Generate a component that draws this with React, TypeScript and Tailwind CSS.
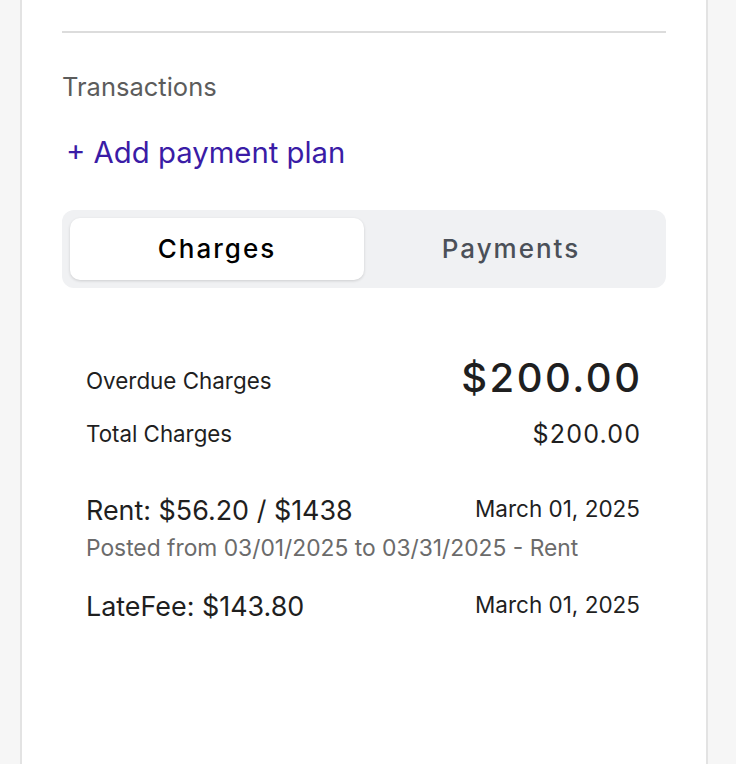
import React, { useState } from 'react';

type Charge = {
  label: string;
  date: string;
  note?: string;
};

const charges: Charge[] = [
  { label: 'Rent: $56.20 / $1438', date: 'March 01, 2025', note: 'Posted from 03/01/2025 to 03/31/2025 - Rent' },
  { label: 'LateFee: $143.80', date: 'March 01, 2025' }
];

const App = () => {
  const [tab, setTab] = useState<'charges' | 'payments'>('charges');
  return <div className="min-h-screen bg-[#f6f6f6] pl-[20px] font-['Inter','Liberation_Sans',sans-serif]">
      <div className="w-[688px] min-h-[764px] bg-white border-x-2 border-[#e3e3e3] px-[40px] pt-[31px]">
        <div className="h-[2px] bg-[#dcdcdc]" />
        <div className="mt-[38px] text-[25.5px] leading-[32px] text-[#5c5c5c]">Transactions</div>
        <button type="button" className="mt-[32px] block pl-[4px] text-[29.3px] leading-[36px] text-[#3a1ca6]">
          + Add payment plan
        </button>
        <div className="mt-[39px] grid grid-cols-2 rounded-[12px] bg-[#f0f1f3] p-[8px]">
          <button type="button" onClick={() => setTab('charges')} className={`h-[62px] pb-[2px] rounded-[10px] text-[26px] font-medium tracking-[2px] ${tab === 'charges' ? 'bg-white text-black shadow-[0_1px_3px_rgba(0,0,0,0.15)]' : 'text-[#4b5058]'}`}>
            Charges
          </button>
          <button type="button" onClick={() => setTab('payments')} className={`h-[62px] pb-[2px] rounded-[10px] text-[26px] font-medium tracking-[2px] ${tab === 'payments' ? 'bg-white text-black shadow-[0_1px_3px_rgba(0,0,0,0.15)]' : 'text-[#4b5058]'}`}>
            Payments
          </button>
        </div>
        <div className="pl-[24px] pr-[26px] text-[#1f1f1f]">
          <div className="mt-[66px] flex items-center justify-between">
            <span className="pt-[6px] text-[22.4px] leading-[30px]">Overdue Charges</span>
            <span className="text-[40px] leading-[48px] font-medium tracking-[2.5px] -mr-[2.5px]">$200.00</span>
          </div>
          <div className="mt-[16px] flex items-center justify-between">
            <span className="text-[22.3px] leading-[30px]">Total Charges</span>
            <span className="text-[25px] leading-[32px] tracking-[1.2px] -mr-[1.2px]">$200.00</span>
          </div>
          {charges.map((c, i) => <div key={c.label} className={i === 0 ? 'mt-[43px]' : 'mt-[26px]'}>
              <div className="flex items-start justify-between">
                <span className="text-[26.9px] leading-[34px]">{c.label}</span>
                <span className="pt-[2px] text-[22.5px] leading-[28px]">{c.date}</span>
              </div>
              {c.note && <div className="mt-[6px] text-[22.8px] leading-[30px] text-[#6b6b6b]">{c.note}</div>}
            </div>)}
        </div>
      </div>
    </div>;
};

export default App;
